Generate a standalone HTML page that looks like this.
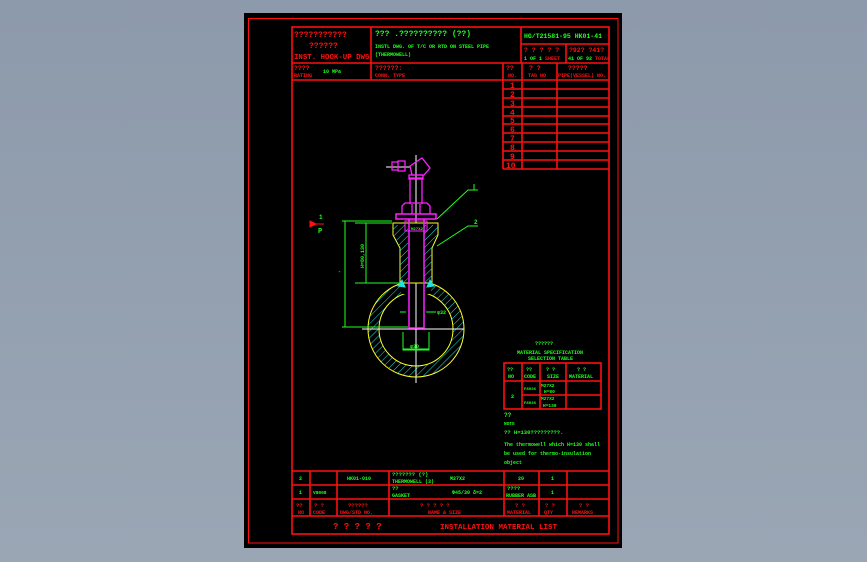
<!DOCTYPE html>
<html><head><meta charset="utf-8"><style>
html,body{margin:0;padding:0;width:867px;height:562px;overflow:hidden;background:linear-gradient(#8d9aab,#9aa6b4);}
svg{position:absolute;left:0;top:0}
text{font-family:"Liberation Mono",monospace;font-weight:bold}
.r{fill:#ff1010}.g{fill:#20ff20}
</style></head><body>
<svg width="867" height="562" viewBox="0 0 867 562">
<defs><pattern id="hatch" width="5" height="5" patternUnits="userSpaceOnUse" patternTransform="rotate(45)"><line x1="0" y1="0" x2="0" y2="5" stroke="#20e0e0" stroke-width="1"/></pattern></defs>
<rect x="244" y="13" width="378" height="535" fill="#000"/>
<rect x="248.5" y="18.5" width="369.5" height="524.5" fill="none" stroke="#ff1010" stroke-width="1"/>
<g stroke="#ff1010" stroke-width="1.6" fill="none">
<rect x="292" y="27" width="317" height="507"/>
<line x1="371" y1="27" x2="371" y2="80"/>
<line x1="521" y1="27" x2="521" y2="63"/>
<line x1="521" y1="44" x2="609" y2="44"/>
<line x1="566" y1="44" x2="566" y2="63"/>
<line x1="292" y1="63" x2="609" y2="63"/>
<line x1="292" y1="80" x2="503" y2="80"/>
<line x1="503" y1="63" x2="503" y2="169"/>
<line x1="522" y1="63" x2="522" y2="169"/>
<line x1="557" y1="63" x2="557" y2="169"/>
<line x1="503" y1="169" x2="609" y2="169"/>
<path d="M503 80H609M503 89H609M503 98H609M503 107H609M503 116H609M503 124H609M503 133H609M503 142H609M503 151H609M503 160H609"/>
<rect x="504" y="363" width="97" height="46"/>
<line x1="504" y1="381" x2="601" y2="381"/>
<line x1="522" y1="395" x2="601" y2="395"/>
<line x1="522" y1="363" x2="522" y2="409"/>
<line x1="540" y1="363" x2="540" y2="409"/>
<line x1="566" y1="363" x2="566" y2="409"/>
<line x1="292" y1="471" x2="609" y2="471"/>
<line x1="292" y1="485" x2="609" y2="485"/>
<line x1="292" y1="499" x2="609" y2="499"/>
<line x1="292" y1="516" x2="609" y2="516"/>
<path d="M310 471V516M337 471V516M389 471V516M504 471V516M539 471V516M567 471V516"/>
</g>
<g font-size="8">
<text x="294" y="37" class="r">???????????</text>
<text x="309" y="48" class="r">??????</text>
<text x="294" y="59" class="r" font-size="7.4">INST. HOOK-UP DWG</text>
<text x="375" y="36" class="g">??? .??????????   (??)</text>
<text x="524" y="38" class="g" font-size="6.5">HG/T21581-95  HK01-41</text>
<text x="294" y="70" class="r" font-size="6.5">????</text>
<text x="375" y="70" class="r" font-size="6.5">??????:</text>
<text x="506" y="70" class="r" font-size="6.5">??</text>
<text x="529" y="70" class="r" font-size="6.5">? ?</text>
<text x="568" y="70" class="r" font-size="6.5">?????</text>
<text x="524" y="52" class="r" font-size="6.5">? ? ? ? ?</text>
<text x="569" y="52" class="r" font-size="6.5">?92? ?41?</text>
</g>
<g font-size="5" class="g">
<text x="375" y="48">INSTL DWG. OF T/C OR RTD ON STEEL PIPE</text>
<text x="375" y="56">(THERMOWELL)</text>
<text x="524" y="60">1 OF 1 <tspan class="r">SHEET</tspan></text>
<text x="568" y="60">41 OF 92 <tspan class="r">TOTAL</tspan></text>
<text x="323" y="73">10 MPa</text>
</g>
<g font-size="5" class="r">
<text x="294" y="77">RATING</text>
<text x="375" y="77">CONN. TYPE</text>
<text x="508" y="77">NO.</text>
<text x="528" y="77">TAG NO</text>
<text x="558" y="77">PIPE(VESSEL) NO.</text>
</g>
<g font-size="8" class="r">
<text x="510" y="88">1</text><text x="510" y="97">2</text><text x="510" y="106">3</text><text x="510" y="115">4</text><text x="510" y="123">5</text><text x="510" y="132">6</text><text x="510" y="141">7</text><text x="510" y="150">8</text><text x="510" y="159">9</text><text x="506" y="168">10</text>
</g>
<g fill="none" stroke-width="1">
<path d="M416 281a48 48 0 1 1 -0.01 0ZM416 292a37 37 0 1 0 0.01 0Z" fill="url(#hatch)" fill-rule="evenodd" stroke="none"/>
<circle cx="416" cy="329" r="48" stroke="#ffff20"/>
<circle cx="416" cy="329" r="37" stroke="#ffff20"/>
<rect x="401" y="280" width="30" height="14" fill="#000"/>
<line x1="416" y1="155" x2="416" y2="383" stroke="#fff"/>
<line x1="362" y1="329" x2="464" y2="329" stroke="#fff"/>
<line x1="386" y1="167" x2="410" y2="167" stroke="#fff"/>
<path d="M393 223H438V235L432 248V283H400V248L393 235Z" stroke="#ffff20" fill="#000"/>
<path d="M393 225H408V283H400V248L393 235ZM424 225H438V235L432 248V283H424Z" stroke="none" fill="url(#hatch)"/>
<path d="M409 219V328H424V219" stroke="#ff20ff" stroke-width="1.5"/>
<rect x="396" y="214" width="40" height="5" stroke="#ff20ff" stroke-width="1.5"/>
<path d="M402 214V206L405 203H427L430 206V214M412 204V214M420 204V214" stroke="#ff20ff" stroke-width="1.3"/>
<path d="M410 204V178H422V204M409 175H423V179H409Z" stroke="#ff20ff" stroke-width="1.3"/>
<path d="M412 175L410 166L422 158L430 168L424 175Z" stroke="#ff20ff" stroke-width="1.3"/>
<path d="M392 162H398V170H392ZM398 161H405V171H398Z" stroke="#ff20ff" stroke-width="1.3"/>
<rect x="405" y="221" width="22" height="10" stroke="#ff20ff"/>
<path d="M398 286L402 280L405 287ZM434 286L430 280L427 287Z" fill="#20e0e0" stroke="#20e0e0"/>
<g stroke="#20ff20">
<path d="M342 221H392M342 327H408M345 221V327M355 223H392M355 283H400M366 223V283"/>
<path d="M403 332V350H429V332M403 349H429M426 312H436M400 312H406"/>
<path d="M437 219L468 190H478M474 190V184M437 246L468 226H478"/>
</g>
<path d="M310 221L316 224L310 227ZM316 224H324" stroke="#ff1010" fill="#ff1010"/>
</g>
<g font-size="5" class="g">
<text x="319" y="219" font-size="6">1</text>
<text x="318" y="233" font-size="7">P</text>
<text x="474" y="224" font-size="6">2</text>
<text x="338" y="273">-</text>
<text x="411" y="230" font-size="4">M27X2</text>
<text x="437" y="314">φ32</text>
<text x="410" y="348">φ30</text>
<text transform="translate(364,268) rotate(-90)" font-size="5">H=80,130</text>
<text x="535" y="345" font-size="5">??????</text>
<text x="517" y="354">MATERIAL SPECIFICATION</text>
<text x="528" y="360">SELECTION TABLE</text>
<text x="507" y="371">??</text><text x="526" y="371">??</text><text x="546" y="371">? ?</text><text x="577" y="371">? ?</text>
<text x="508" y="378">NO</text><text x="524" y="378">CODE</text><text x="547" y="378">SIZE</text><text x="569" y="378">MATERIAL</text>
<text x="511" y="398">2</text>
<text x="524" y="390" font-size="4">F8036</text><text x="524" y="404" font-size="4">F8036</text>
<text x="541" y="387" font-size="4.5">M27X2</text><text x="544" y="393" font-size="4.5">H=80</text>
<text x="541" y="400" font-size="4.5">M27X2</text><text x="543" y="407" font-size="4.5">H=130</text>
<text x="504" y="417" font-size="6">??</text>
<text x="504" y="425" font-size="4.5">NOTE</text>
<text x="504" y="434" font-size="5.5">?? H=130?????????.</text>
<text x="504" y="446">The thermowell which H=130 shall</text>
<text x="504" y="455">be used for thermo-insulation</text>
<text x="504" y="464">object</text>
<text x="299" y="480">2</text><text x="347" y="480">HK01-010</text>
<text x="392" y="476" font-size="5.5">??????? (?)</text><text x="450" y="480">M27X2</text>
<text x="392" y="483">THERMOWELL (3)</text>
<text x="518" y="480">20</text><text x="551" y="480">1</text>
<text x="299" y="494">1</text><text x="313" y="494" font-size="4.5">V8008</text>
<text x="392" y="490" font-size="5.5">??</text><text x="392" y="497">GASKET</text><text x="452" y="494">Φ45/30 δ=2</text>
<text x="507" y="490" font-size="5.5">????</text><text x="506" y="497">RUBBER ASB</text><text x="551" y="494">1</text>
</g>
<g font-size="5.5" class="r">
<text x="296" y="507">??</text><text x="314" y="507">? ?</text><text x="348" y="507">??????</text><text x="420" y="507">? ? ? ? ?</text><text x="515" y="507">? ?</text><text x="545" y="507">? ?</text><text x="579" y="507">? ?</text>
<text x="298" y="514" font-size="5">NO</text><text x="313" y="514" font-size="5">CODE</text><text x="340" y="514" font-size="5">DWG/STD NO.</text><text x="428" y="514" font-size="5">NAME &amp; SIZE</text><text x="507" y="514" font-size="5">MATERIAL</text><text x="544" y="514" font-size="5">QTY</text><text x="572" y="514" font-size="5">REMARKS</text>
<text x="333" y="529" font-size="9">? ? ? ? ?</text>
<text x="440" y="529" font-size="7.5">INSTALLATION MATERIAL LIST</text>
</g>
</svg>
</body></html>
